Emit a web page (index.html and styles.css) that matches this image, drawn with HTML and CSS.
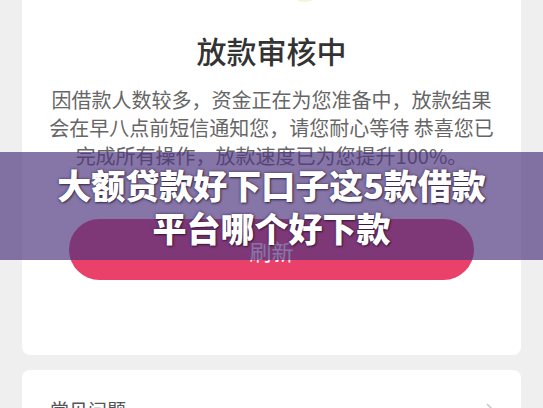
FILE: index.html
```html
<!DOCTYPE html>
<html lang="zh-CN">
<head>
  <meta charset="UTF-8" />
  <meta name="viewport" content="width=device-width, initial-scale=1.0"/>
  <title>放款审核中</title>
  <link rel="stylesheet" href="styles.css">
</head>
<body>
  <div class="card status">
    <div class="status-icon">
      <svg width="160" height="60" viewBox="0 0 160 60">
        <ellipse cx="113" cy="36" rx="20" ry="23" fill="#f6f4d8"/>
      </svg>
    </div>
    <h1 class="title">放款审核中</h1>
    <p class="desc">因借款人数较多，资金正在为您准备中，放款结果会在早八点前短信通知您，请您耐心等待 恭喜您已完成所有操作，放款速度已为您提升100%。</p>
    <button class="btn">刷新</button>
  </div>

  <div class="card faq">
    <span class="faq-title">常见问题</span>
    <svg class="chevron" width="10" height="16" viewBox="0 0 10 16">
      <path d="M2 2 L8 8 L2 14" fill="none" stroke="#c8c8c8" stroke-width="1.6"/>
    </svg>
  </div>

  <div class="banner">
    <div class="banner-text">大额贷款好下口子这5款借款<br>平台哪个好下款</div>
  </div>
</body>
</html>
```

FILE: styles.css
```css
body {
  background: #efefef;
  font-family: "Noto Sans CJK SC", sans-serif;
  color: #333;
  margin: 0;
  padding: 0 22px;
}
.card {
  background: #fff;
  border-radius: 8px;
}
.status {
  margin-top: -57px;
  padding: 0 24px 75px;
  text-align: center;
}
.status-icon {
  height: 60px;
}
.title {
  font-size: 30px;
  font-weight: 500;
  line-height: 40px;
  margin: 27px 0 0;
  color: #333;
}
.desc {
  font-size: 20px;
  line-height: 28px;
  color: #666;
  margin: 16px 0 0;
}
.btn {
  display: block;
  width: 405px;
  height: 61px;
  margin: 49px auto 0;
  border: none;
  border-radius: 31px;
  background: #e9416a;
  color: #fff;
  font-family: inherit;
  font-size: 22px;
}
.faq {
  margin-top: 15px;
  padding: 27px 26px 20px 28px;
  display: flex;
  justify-content: space-between;
  align-items: center;
}
.faq-title {
  font-size: 19px;
  line-height: 26px;
  color: #555;
}
.banner {
  position: absolute;
  top: 152px;
  left: 0;
  right: 0;
  height: 108px;
  background: rgba(77, 52, 125, 0.68);
  display: flex;
  align-items: center;
  justify-content: center;
}
.banner-text {
  color: #fff;
  font-size: 34px;
  font-weight: 900;
  line-height: 43px;
  text-align: center;
  text-shadow: 0 0 3px rgba(40, 20, 60, 0.7), 1px 1px 2px rgba(0, 0, 0, 0.5);
}
```
